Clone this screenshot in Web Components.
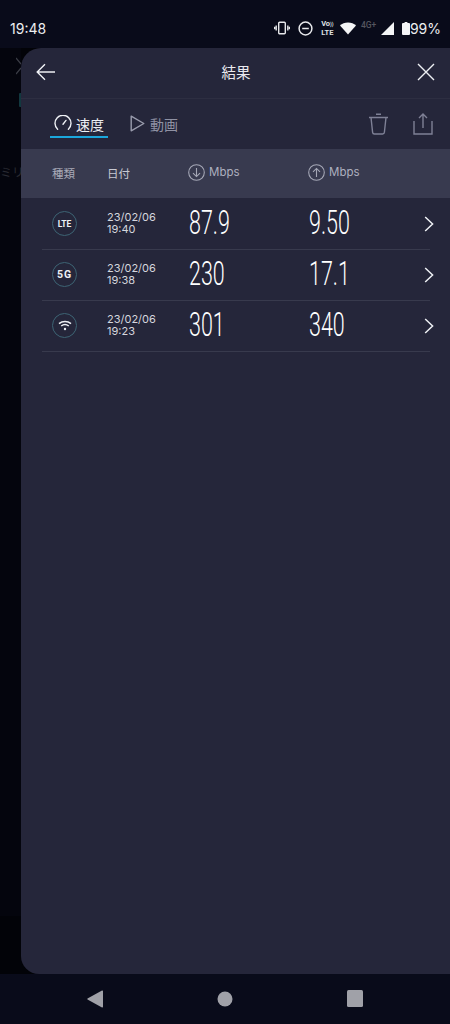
<!DOCTYPE html>
<html lang="ja">
<head>
<meta charset="utf-8">
<title>結果</title>
<style>
  html, body { margin: 0; padding: 0; background: #090b1a; }
  body { width: 450px; height: 1024px; overflow: hidden; font-family: Inter, "Noto Sans CJK JP", sans-serif; }
  speed-app { height: 1024px; }
</style>
</head>
<body>
<speed-app>
  <status-bar slot="top" time="19:48" battery="99%"></status-bar>
  <results-sheet>
    <sheet-header slot="header" title="結果"></sheet-header>
    <tab-bar slot="tabs"></tab-bar>
    <table-head slot="head"></table-head>
    <result-row type="lte" date="23/02/06" time="19:40" down="87.9" up="9.50"></result-row>
    <result-row type="5g" date="23/02/06" time="19:38" down="230" up="17.1"></result-row>
    <result-row type="wifi" date="23/02/06" time="19:23" down="301" up="340"></result-row>
  </results-sheet>
  <nav-bar slot="bottom"></nav-bar>
</speed-app>

<script>
const FONT_UI = `Inter, "Noto Sans CJK JP", sans-serif`;

class SpeedApp extends HTMLElement {
  constructor() {
    super();
    this.attachShadow({ mode: 'open' });
    this.shadowRoot.innerHTML = `
      <style>
        :host { display: flex; flex-direction: column; width: 450px; background: #090b1a; color: #fff; }
        .middle { flex: 1; display: flex; min-height: 0; background: #020308; }
        .behind { position: relative; flex: 0 0 21px; background: linear-gradient(#04050d 0, #04050d 868px, #020308 868px); }
        .behind svg { position: absolute; left: 16px; top: 8px; }
        .dot { position: absolute; left: 19px; top: 45px; width: 2px; height: 14px; border-radius: 1px 0 0 1px; background: #12383f; }
        .ghost { position: absolute; left: 0; top: 114px; font: 12px/20px "Noto Sans CJK JP", sans-serif; color: #2a2b33; white-space: nowrap; }
      </style>
      <slot name="top"></slot>
      <div class="middle">
        <div class="behind">
          <svg width="5" height="20" viewBox="0 0 5 20" fill="none" stroke="#3b3d46" stroke-width="1.2"><path d="M0 2l5 6M5 12l-5 6"/></svg>
          <div class="dot"></div>
          <div class="ghost">ミリ</div>
        </div>
        <slot></slot>
      </div>
      <slot name="bottom"></slot>`;
  }
}

class StatusBar extends HTMLElement {
  constructor() {
    super();
    this.attachShadow({ mode: 'open' });
  }
  connectedCallback() {
    this.shadowRoot.innerHTML = `
      <style>
        :host { display: flex; align-items: center; height: 48px; padding: 8px 9px 0 10px; box-sizing: border-box; font-family: ${FONT_UI}; color: #eceef0; }
        .time { font-size: 14px; flex: 1; }
        .icons { display: flex; align-items: center; }
        svg { display: block; }
        .volte { font: 700 7.5px/7.5px Roboto, sans-serif; color: #dfe0e4; width: 15px; text-align: center; margin-left: 7px; }
        .g4 { font: 500 8.5px/8px Roboto, sans-serif; color: #55565f; margin: -7px 2px 0 5px; width: 18px; }
        .batt { font-size: 14px; }
      </style>
      <div class="time">${this.getAttribute('time')}</div>
      <div class="icons">
        <svg width="16" height="14" viewBox="0 0 16 14" fill="none" stroke="#e8e9ec" stroke-width="1.4"><rect x="4.7" y="1.2" width="6.6" height="11.6" rx="1"/><path d="M2.2 4.5v5M13.8 4.5v5M.6 5.8v2.4M15.4 5.8v2.4"/></svg>
        <svg style="margin-left:8px" width="15" height="15" viewBox="0 0 15 15" fill="none" stroke="#e8e9ec" stroke-width="1.5"><circle cx="7.5" cy="7.5" r="6.4"/><path d="M4.2 7.5h6.6"/></svg>
        <div class="volte">Vo<span style="font-size:5px">))</span><br>LTE</div>
        <svg style="margin-left:5px" width="16" height="13" viewBox="0 0 16 13" fill="#f4f5f6"><path d="M0 3.6C2 1.5 4.8.4 8 .4s6 1.1 8 3.2l-8 9z"/></svg>
        <div class="g4">4G+</div>
        <svg width="13" height="13" viewBox="0 0 13 13" fill="#f4f5f6"><path d="M13 0v13H0z"/></svg>
        <svg style="margin-left:8px" width="8" height="13" viewBox="0 0 8 13" fill="#f4f5f6"><path d="M2.6 0h2.8v1H7a1 1 0 0 1 1 1v10a1 1 0 0 1-1 1H1a1 1 0 0 1-1-1V2a1 1 0 0 1 1-1h1.6z"/></svg>
        <div class="batt">${this.getAttribute('battery')}</div>
      </div>`;
  }
}

class ResultsSheet extends HTMLElement {
  constructor() {
    super();
    this.attachShadow({ mode: 'open' });
    this.shadowRoot.innerHTML = `
      <style>
        :host { display: block; position: relative; flex: 1; min-width: 0; background: #25263a; border-radius: 20px 0 0 18px; overflow: hidden; }
        .rows { padding: 1px 20px 0 21px; }
      </style>
      <slot name="header"></slot>
      <slot name="tabs"></slot>
      <slot name="head"></slot>
      <div class="rows"><slot></slot></div>`;
  }
}

class SheetHeader extends HTMLElement {
  constructor() {
    super();
    this.attachShadow({ mode: 'open' });
  }
  connectedCallback() {
    this.shadowRoot.innerHTML = `
      <style>
        :host { display: flex; align-items: center; justify-content: space-between; height: 51px; box-sizing: border-box; padding: 0 15px 3px 15px; border-bottom: 1px solid #2d2e41; font-family: ${FONT_UI}; }
        .title { font-size: 14.5px; color: #e9e9ee; margin-left: -1px; }
        svg { display: block; }
      </style>
      <svg width="20" height="18" viewBox="0 0 20 18" fill="none" stroke="#eef0f4" stroke-width="1.4"><path d="M19 9H1.2M9 1.2L1.2 9 9 16.8"/></svg>
      <div class="title">${this.getAttribute('title')}</div>
      <svg width="18" height="18" viewBox="0 0 18 18" fill="none" stroke="#eef0f4" stroke-width="1.4"><path d="M1 1l16 16M17 1L1 17"/></svg>`;
  }
}

class TabBar extends HTMLElement {
  constructor() {
    super();
    this.attachShadow({ mode: 'open' });
    this.shadowRoot.innerHTML = `
      <style>
        :host { display: flex; align-items: flex-start; height: 50px; box-sizing: border-box; padding-left: 29px; font-family: ${FONT_UI}; }
        .tab { display: flex; align-items: center; height: 32px; margin-top: 7px; padding-top: 6px; font-size: 14px; box-sizing: border-box; }
        .on { width: 58px; gap: 4px; color: #eef0f4; border-bottom: 2px solid #1ba7dc; padding-left: 4px; }
        .on svg { margin-top: -3px; }
        .off { margin-left: 22px; gap: 5px; padding-bottom: 2px; color: #8f91a3; }
        .off svg { margin-top: -1px; }
        .tools { margin-left: auto; margin-top: 14px; display: flex; gap: 24px; padding-right: 17px; }
        svg { display: block; }
      </style>
      <div class="tab on">
        <svg width="18" height="16" viewBox="0 0 18 16" fill="none" stroke="#eef0f4" stroke-width="1.4" stroke-linecap="round"><path d="M3.6 14.2A8 8 0 1 1 14.4 14.2"/><path d="M9 9.2l3-3.8"/></svg>
        <span>速度</span>
      </div>
      <div class="tab off">
        <svg width="15" height="17" viewBox="0 0 15 17" fill="none" stroke="#9a9cad" stroke-width="1.4" stroke-linejoin="round"><path d="M1.2 1.2v14.6L13.8 8.5z"/></svg>
        <span>動画</span>
      </div>
      <div class="tools">
        <svg width="21" height="22" viewBox="0 0 21 22" fill="none" stroke="#7f8196" stroke-width="1.4"><path d="M1 4.5h19M8 1.2h5M3 4.5l1.6 14.8c.1 1 .8 1.7 1.8 1.7h8.2c1 0 1.7-.7 1.8-1.7L18 4.5"/></svg>
        <svg width="20" height="22" viewBox="0 0 20 22" fill="none" stroke="#7f8196" stroke-width="1.4"><path d="M1 8v13h18V8M10 15V1.2M6 5l4-4 4 4"/></svg>
      </div>`;
  }
}

class TableHead extends HTMLElement {
  constructor() {
    super();
    this.attachShadow({ mode: 'open' });
    this.shadowRoot.innerHTML = `
      <style>
        :host { display: grid; grid-template-columns: 55px 81px 120px 1fr; align-items: center; height: 49px; padding: 0 0 2px 31px; background: #383a4f; font: 11.5px ${FONT_UI}; color: #a9aab8; box-sizing: border-box; }
        .speed { display: flex; align-items: center; gap: 4px; color: #aeb0bf; font-size: 11.5px; }
        .speed span { margin-top: -2px; }
        svg { display: block; }
      </style>
      <div>種類</div>
      <div style="color:#c8c9d2">日付</div>
      <div class="speed">
        <svg width="17" height="17" viewBox="0 0 17 17" fill="none" stroke="#a5a7b6" stroke-width="1.1"><circle cx="8.5" cy="8.5" r="7.8"/><path d="M8.5 4v8.6M5 9.2l3.5 3.4L12 9.2"/></svg>
        <span>Mbps</span>
      </div>
      <div class="speed">
        <svg width="17" height="17" viewBox="0 0 17 17" fill="none" stroke="#a5a7b6" stroke-width="1.1"><circle cx="8.5" cy="8.5" r="7.8"/><path d="M8.5 13V4.4M5 7.8l3.5-3.4L12 7.8"/></svg>
        <span>Mbps</span>
      </div>`;
  }
}

class ResultRow extends HTMLElement {
  constructor() {
    super();
    this.attachShadow({ mode: 'open' });
  }
  badge() {
    const type = this.getAttribute('type');
    if (type === 'wifi') {
      return `<svg width="14" height="11" viewBox="0 0 14 11" fill="none" stroke="#eef0f4" stroke-width="1.5"><path d="M1 3.6C4.4.8 9.6.8 13 3.6M3.2 6c2.2-1.7 5.4-1.7 7.6 0"/><circle cx="7" cy="9" r="1.2" fill="#eef0f4" stroke="none"/></svg>`;
    }
    return `<span class="${type === '5g' ? 'g5' : ''}">${type.toUpperCase()}</span>`;
  }
  connectedCallback() {
    const a = (n) => this.getAttribute(n);
    this.shadowRoot.innerHTML = `
      <style>
        :host { display: grid; grid-template-columns: 65px 82px 120px 1fr 10px; align-items: center; height: 51px; box-sizing: border-box; border-bottom: 1px solid #383a4d; color: #fff; font-family: ${FONT_UI}; }
        .badge { display: flex; align-items: center; justify-content: center; width: 23px; height: 23px; margin: -1px 0 0 10px; border: 1px solid #3d6474; border-radius: 50%; font: 700 8.5px Roboto, sans-serif; color: #eef0f4; }
        .g5 { font-size: 10.5px; letter-spacing: .8px; }
        .date { font-size: 11px; line-height: 12px; color: #d5d6de; margin-top: -2px; }
        .num { font: 300 33px/40px Roboto, sans-serif; color: #fff; margin-top: -3px; }
        .num span { display: inline-block; transform: scaleX(.65); transform-origin: left center; }
        .more { margin: 0 -4px 0 0; justify-self: end; display: block; }
      </style>
      <div class="badge">${this.badge()}</div>
      <div class="date">${a('date')}<br>${a('time')}</div>
      <div class="num"><span>${a('down')}</span></div>
      <div class="num"><span>${a('up')}</span></div>
      <svg class="more" width="10" height="16" viewBox="0 0 10 16" fill="none" stroke="#eef0f4" stroke-width="1.5"><path d="M1.2 1l7.4 7-7.4 7"/></svg>`;
  }
}

class NavBar extends HTMLElement {
  constructor() {
    super();
    this.attachShadow({ mode: 'open' });
    this.shadowRoot.innerHTML = `
      <style>
        :host { display: grid; grid-template-columns: 130px 130px 130px; justify-content: center; align-items: center; height: 50px; box-sizing: border-box; padding-bottom: 1px; background: #090b1a; }
        svg { display: block; justify-self: center; }
      </style>
      <svg width="16" height="18" viewBox="0 0 16 18" fill="#a0a1a8" style="margin-right:1px"><path d="M15 .6c.5-.3 1 0 1 .6v15.6c0 .6-.5.9-1 .6L.5 9.4c-.3-.2-.3-.6 0-.8z"/></svg>
      <svg width="16" height="16" viewBox="0 0 16 16" fill="#a0a1a8"><circle cx="8" cy="8" r="7.5"/></svg>
      <svg width="16" height="17" viewBox="0 0 16 17" fill="#a0a1a8" style="margin-left:-1px"><rect width="16" height="17" rx="1.5"/></svg>`;
  }
}

customElements.define('speed-app', SpeedApp);
customElements.define('status-bar', StatusBar);
customElements.define('results-sheet', ResultsSheet);
customElements.define('sheet-header', SheetHeader);
customElements.define('tab-bar', TabBar);
customElements.define('table-head', TableHead);
customElements.define('result-row', ResultRow);
customElements.define('nav-bar', NavBar);
</script>
</body>
</html>
